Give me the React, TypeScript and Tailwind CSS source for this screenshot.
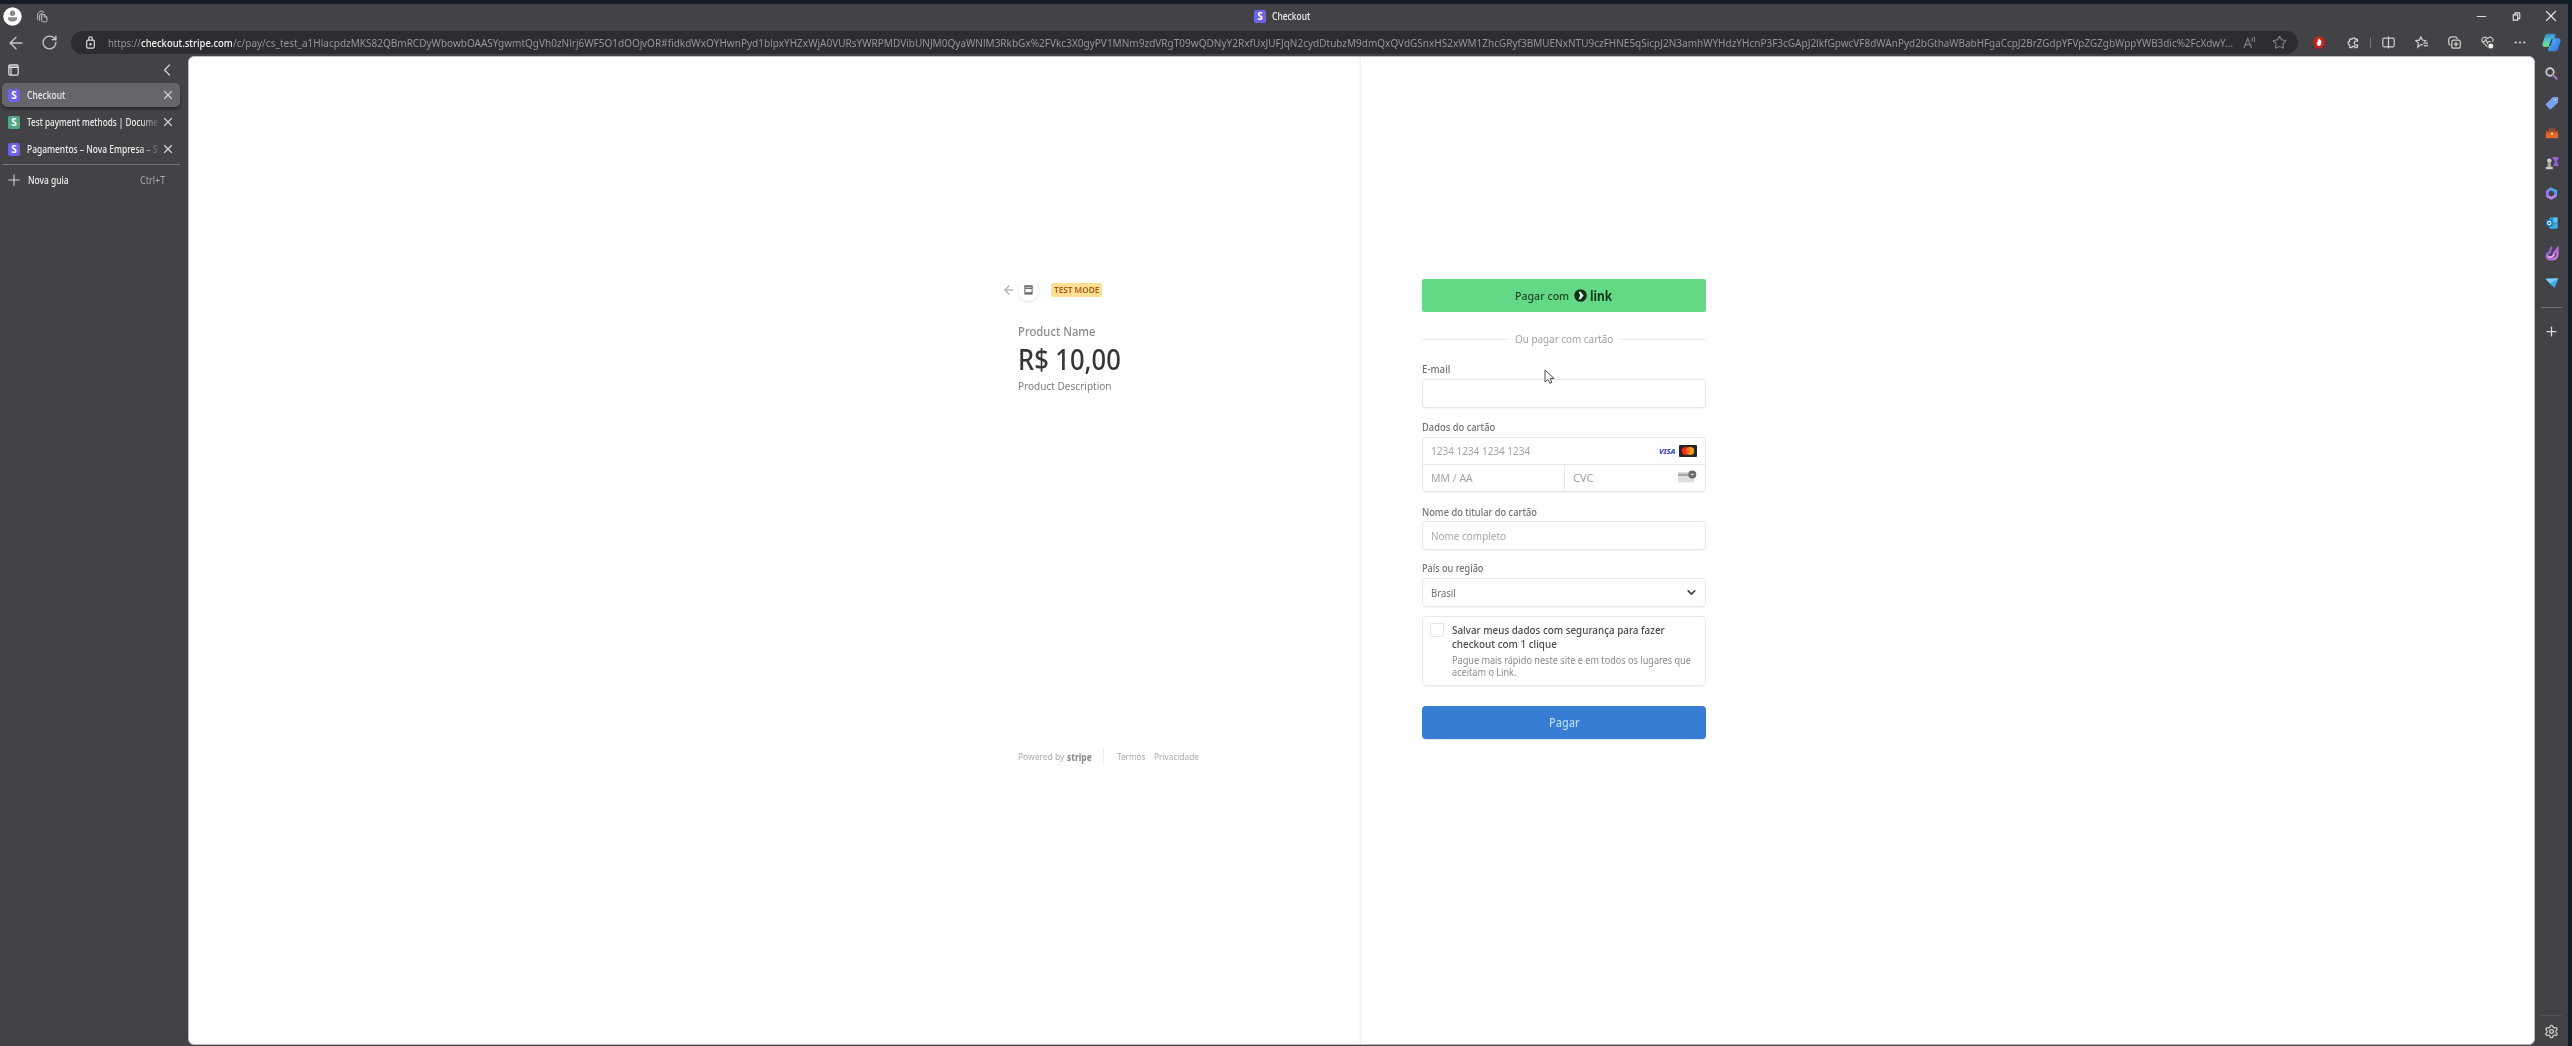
import React, { useLayoutEffect, useRef, useState } from "react";
import {
  ArrowLeft, RotateCw, ChevronLeft, ChevronDown, X, Plus, Minus, Search, Star,
  Settings,
} from "lucide-react";

/** One line of text, condensed or expanded horizontally to fill `w` pixels. */
function Fit({ w, className = "", children }: { w: number; className?: string; children: React.ReactNode }) {
  const ref = useRef<HTMLSpanElement>(null);
  const [scale, setScale] = useState(1);
  useLayoutEffect(() => {
    if (ref.current) setScale(w / ref.current.offsetWidth);
  }, [w]);
  return (
    <div className={"shrink-0 whitespace-nowrap " + className} style={{ width: w }}>
      <span ref={ref} className="inline-block origin-left" style={{ transform: `scaleX(${scale})` }}>
        {children}
      </span>
    </div>
  );
}

function Favicon({ green = false }: { green?: boolean }) {
  return (
    <span
      className={
        "flex h-[13px] w-3 shrink-0 items-center justify-center rounded-[2px] text-[10px] leading-none font-bold text-white " +
        (green ? "bg-[#4fa884]" : "bg-[#6c63e8]")
      }
    >
      S
    </span>
  );
}

function Tab({ title, width, active, green, fade }: { title: string; width: number; active?: boolean; green?: boolean; fade?: boolean }) {
  return (
    <div
      className={
        "flex h-[24px] w-[178px] items-center rounded-[5px] pl-1.5 " +
        (active ? "bg-[#66656a] shadow-[0_2px_3px_rgba(0,0,0,0.45)]" : "")
      }
    >
      <Favicon green={green} />
      <div className={"ml-[7px] w-[134px] overflow-hidden " + (fade ? "[mask-image:linear-gradient(to_right,black_84%,transparent)]" : "")}>
        <Fit w={width} className="text-[10.5px] leading-[16px] font-medium text-[#ededee]">{title}</Fit>
      </div>
      <X className="h-[14px] w-[14px] text-[#d5d5d7]" strokeWidth={2} />
    </div>
  );
}

const URL_PARTS = [
  { w: 33, t: "https://" },
  { w: 92, t: "checkout.stripe.com", host: true },
  { w: 409, t: "/c/pay/cs_test_a1HlacpdzMKS82QBmRCDyWbowbOAASYgwmtQgVh0zNlrj6WF5O1dOOj" },
  { w: 639, t: "vOR#fidkdWxOYHwnPyd1blpxYHZxWjA0VURsYWRPMDVibUNJM0QyaWNlM3RkbGx%2FVkc3X0gyPV1MNm9zdVRgT09wQDNyY2RxfUxJUF" },
  { w: 617, t: "JqN2cydDtubzM9dmQxQVdGSnxHS2xWM1ZhcGRyf3BMUENxNTU9czFHNE5qSicpJ2N3amhWYHdzYHcnP3F3cGApJ2lkfGpwcVF8dWAn" },
  { w: 335, t: "Pyd2bGthaWBabHFgaCcpJ2BrZGdpYFVpZGZgbWppYWB3dic%2FcXdwY..." },
];

function TitleBar() {
  return (
    <div className="flex h-[27px] items-center pb-[3px]">
      <svg className="ml-[3px] h-[19px] w-[19px]" viewBox="0 0 19 19">
        <circle cx="9.500" cy="9.500" r="9.200" fill="#fff" />
        <circle cx="9.500" cy="6.200" r="2.700" fill="#8a8a8a" />
        <path d="M5 10.200h9v1.200c0 2-1.900 3.200-4.500 3.200S5 13.400 5 11.400z" fill="#8a8a8a" />
      </svg>
      <svg className="ml-[14px] h-[13px] w-[13px]" viewBox="0 0 14 16" fill="none" stroke="#c2c2c4" strokeWidth="1.200">
        <path d="M1 12V5l3-3.500h3l2 1.500M3.500 13.500V6L7 3.500M6 5.500h3l3.500 3V13c0 1-.5 1.500-1.500 1.500H7.500C6.500 14.500 6 14 6 13zM9 5.500v3.200h3.500" />
      </svg>
      <div className="ml-[1205px] flex items-center gap-[6px]">
        <Favicon />
        <Fit w={38} className="text-[10.5px] leading-[16px] font-medium text-[#f0f0f0]">Checkout</Fit>
      </div>
      <div className="mr-[8px] ml-auto flex items-center">
        <Minus className="h-[15px] w-[15px] text-[#dadada]" strokeWidth={1.800} />
        <svg className="ml-[23px] h-[9px] w-[9px]" viewBox="0 0 11 11" fill="none" stroke="#e0e0e0" strokeWidth="1.400">
          <path d="M1.500 3.500h5.500v6.500H1.500zM3.500 3V1.500c0-.3.2-.5.5-.5h4.500c.5 0 1 .4 1 1v5.500c0 .4-.3.600-.7.600H7.500" />
        </svg>
        <X className="ml-[21px] h-[18px] w-[18px] text-[#e2e2e2]" strokeWidth={1.600} />
      </div>
    </div>
  );
}

function Toolbar() {
  return (
    <div className="flex h-[25px] items-start">
      <div className="flex h-[23px] w-[71px] items-center">
        <ArrowLeft className="ml-[6px] h-5 w-5 text-[#c8c8ca]" strokeWidth={1.600} />
        <RotateCw className="ml-[15px] h-[17px] w-[17px] text-[#c8c8ca]" strokeWidth={1.900} />
      </div>
      <div className="flex h-[23px] w-[2227px] items-center rounded-full bg-[#2d2c30]">
        <svg className="ml-[15px] h-[13px] w-[9px]" viewBox="0 0 9 13" fill="none" stroke="#dcdcde" strokeWidth="1.200">
          <rect x=".7" y="4.200" width="7.600" height="8" rx="1.200" />
          <path d="M2.700 4.200V2.600a1.800 1.800 0 0 1 3.600 0v1.600" />
          <circle cx="4.500" cy="8.200" r=".6" fill="#dcdcde" />
        </svg>
        <div className="ml-[13px] flex">
          {URL_PARTS.map((p) => (
            <Fit key={p.t} w={p.w} className={"text-[11.5px] leading-[20px] " + (p.host ? "font-medium text-[#f4f4f6]" : "text-[#97969c]")}>
              {p.t}
            </Fit>
          ))}
        </div>
        <svg className="ml-[10px] h-[13px] w-[13px]" viewBox="0 0 13 13" fill="none" stroke="#86858a" strokeWidth="1.100">
          <path d="M1 12 4.800 2.500 8.600 12M2.300 8.700h5M8.700 2c1 .7 1 2.500 0 3.200M10.500.700c1.600 1.500 1.600 4 .5 5.300" />
        </svg>
        <Star className="ml-4 h-[15px] w-[15px] text-[#86858a]" strokeWidth={1.700} />
      </div>
      <div className="flex h-[23px] flex-1 items-center text-[#cfcfd1]">
        <svg className="ml-[15px] h-[13px] w-3" viewBox="0 0 12 13">
          <path d="M3.700.5h4.600l3.200 3.300v5.400l-3.200 3.300H3.700L.5 9.200V3.800z" fill="#c8221c" />
          <path d="M6.300 2.800c.8 0 1 .6 1 1.500l1 .5c.3 2.400-.2 5.200-2.300 5.200-1.700 0-2.300-1.800-2.300-3.500l.9-.2.300-2c.2-.9.500-1.500 1.400-1.500z" fill="#fff" />
        </svg>
        <svg className="ml-[22px] h-3 w-3" viewBox="0 0 12 12" fill="none" stroke="currentColor" strokeWidth="1.300">
          <path d="M10.500 4V3c0-.6-.4-1-1-1H8.200C8.200.6 5 .6 5 2H3.500c-.6 0-1 .4-1 1v1.500C.6 4.500.6 7.700 2.500 7.700V9.500c0 .6.4 1 1 1H5c0-1 .6-1.300 1.500-1.300s1.500.3 1.500 1.300h1.500c.6 0 1-.4 1-1V8C8.300 8.300 7.300 7.500 7.300 6s1-2.300 3.200-2z" />
        </svg>
        <span className="ml-[11px] h-[11px] w-px bg-[#77767b]" />
        <svg className="ml-[11px] h-[13px] w-[13px]" viewBox="0 0 13 13" fill="none" stroke="currentColor" strokeWidth="1.200">
          <path d="M5 2.200H2c-.7 0-1.200.5-1.200 1.200v6.200c0 .7.500 1.200 1.200 1.200h3M8 2.200h3c.7 0 1.200.5 1.200 1.200v6.200c0 .7-.5 1.200-1.200 1.200H8M6.500.5v12M4.500 2.200h4M4.500 10.800h4" />
        </svg>
        <svg className="ml-5 h-[13px] w-[13px]" viewBox="0 0 15 15" fill="none" stroke="currentColor" strokeWidth="1.400">
          <path d="M9 10.500 7 9.700 3.200 13l.6-4.700L1 5.300l4-.6L6.800 1l1.800 3.700 3.700.6-1.500 1.500M9.500 8.200H15M10.200 11.200H15" />
        </svg>
        <svg className="ml-5 h-[13px] w-[13px]" viewBox="0 0 13 13" fill="none" stroke="currentColor" strokeWidth="1.200">
          <rect x="3.800" y="4.200" width="8.500" height="8" rx="2" />
          <path d="M8 6v4.400M5.900 8.200h4.300M2.500 9.500C1.200 9 .7 8.200.7 7V4.200C.7 2.200 2 .800 4 .800h2.500c1.600 0 2.500.7 2.900 1.900" />
        </svg>
        <svg className="ml-5 h-[13px] w-[13px]" viewBox="0 0 13 13" fill="none" stroke="currentColor" strokeWidth="1.100">
          <path d="M6.500 10.800 1.500 5.800C-.5 3 3.500-.7 6.500 2.500 9.500-.7 13.500 3 11.500 5.800M.5 5.500h3l1.300-2 1.700 3.800 1.300-1.800h2" />
          <circle cx="9.800" cy="10" r="2.500" fill="#ededee" stroke="none" />
        </svg>
        <svg className="ml-[20px] h-[13px] w-3" viewBox="0 0 12 13" fill="#d8d8da">
          <circle cx="1.700" cy="6.500" r="1.100" /><circle cx="6" cy="6.500" r="1.100" /><circle cx="10.300" cy="6.500" r="1.100" />
        </svg>
        <svg className="ml-[16px] h-[19px] w-[19px]" viewBox="0 0 20 24" preserveAspectRatio="none">
          <defs>
            <linearGradient id="cpA" x1="0" y1="0" x2="0" y2="1"><stop offset="0" stopColor="#2f8fd0" /><stop offset=".5" stopColor="#4fc6c4" /><stop offset="1" stopColor="#7ce08c" /></linearGradient>
            <linearGradient id="cpB" x1="0" y1="0" x2="1" y2="1"><stop offset="0" stopColor="#52b8f0" /><stop offset="1" stopColor="#2f6fe0" /></linearGradient>
          </defs>
          <path d="M6 1h6.500c1.500 0 2 1 1.500 2.500l-3.500 11c-.6 2-1.500 3-3.500 3H3c-2 0-3-1.500-2.500-4L3 4C3.500 2 4.500 1 6 1z" fill="url(#cpA)" />
          <path d="M14 23H8c-1.500 0-2-1-1.500-2.500l3.500-11c.6-2 1.500-3 3.500-3H17c2 0 3 1.500 2.500 4L17 20c-.5 2-1.500 3-3 3z" fill="url(#cpB)" />
          <path d="m9.500 8.500 2-1.500-2.500 9-1.800 1.200z" fill="#2a3d66" />
        </svg>
      </div>
    </div>
  );
}

function TabPane() {
  return (
    <div className="w-[188px] shrink-0 pl-0.5">
      <div className="flex h-[27px] items-center">
        <svg className="ml-[6px] h-[12px] w-[11px]" viewBox="0 0 11 12" fill="none" stroke="#e2e2e3" strokeWidth="1.200">
          <rect x=".8" y=".8" width="9.400" height="10.400" rx="1.500" />
          <path d="M.8 2h9.400M.8 3.500h9.400M3 3.500v7.500" />
        </svg>
        <ChevronLeft className="ml-[138px] h-[20px] w-[20px] text-[#d0d0d2]" strokeWidth={1.500} />
      </div>
      <div className="flex flex-col gap-[3px]">
        <Tab title="Checkout" width={38} active />
        <Tab title="Test payment methods | Docume" width={131} green fade />
        <Tab title="Pagamentos – Nova Empresa – S" width={131} fade />
      </div>
      <div className="mt-[3px] h-px w-[178px] bg-[#77767b]" />
      <div className="mt-[7px] flex h-[16px] items-center">
        <Plus className="ml-[3px] h-[18px] w-[18px] text-[#d0d0d2]" strokeWidth={1.500} />
        <Fit w={41} className="ml-[5px] text-[10.5px] leading-[16px] font-medium text-[#f0f0f0]">Nova guia</Fit>
        <Fit w={25} className="ml-[71px] text-[10.5px] leading-[16px] text-[#a9a9ac]">Ctrl+T</Fit>
      </div>
    </div>
  );
}

function SideIcon({ children }: { children: React.ReactNode }) {
  return <div className="flex h-[30px] items-center justify-center">{children}</div>;
}

function EdgeSidebar() {
  return (
    <div className="flex w-[33px] shrink-0 flex-col pt-0.5">
      <SideIcon>
        <svg className="h-[13px] w-[13px]" viewBox="0 0 13 13" fill="none"><circle cx="5" cy="5" r="3.800" stroke="#cfcfd0" strokeWidth="1.700" /><path d="m8 8 3.800 3.800" stroke="#a77bd0" strokeWidth="1.900" strokeLinecap="round" /></svg>
      </SideIcon>
      <SideIcon>
        <svg className="h-[14px] w-[14px]" viewBox="0 0 14 14"><path d="M8 1h4c.8 0 1.200.4 1.200 1.200V6.500L6.500 12.700c-.8.7-1.500.7-2.200 0L1.200 9.600c-.6-.7-.6-1.400.1-2z" fill="#7d9fea" /><circle cx="10.500" cy="3.700" r=".8" fill="#e8efff" /></svg>
      </SideIcon>
      <SideIcon>
        <svg className="h-[11px] w-[14px]" viewBox="0 0 14 12" preserveAspectRatio="none"><path d="M4.500 3V1.500h5V3" fill="none" stroke="#b9501f" strokeWidth="1.200" /><path d="M.8 3h12.400v3.500H.8z" fill="#b5521f" /><path d="M.8 5.800h12.400v4.400c0 .6-.4 1-1 1H1.800c-.6 0-1-.4-1-1z" fill="#e8682a" /><path d="M6 5h2v2.300H6z" fill="#ffd9b0" /></svg>
      </SideIcon>
      <SideIcon>
        <svg className="h-[14px] w-[14px]" viewBox="0 0 14 14"><circle cx="4.300" cy="4.700" r="2.300" fill="#c9c9c9" /><path d="M3 6.500h2.600l.8 4.500H2.200z" fill="#a5a5a5" /><path d="M.8 11h7v2.200h-7z" fill="#c9c9c9" /><path d="M7.500 1h6v1.500l-1.300 2v2l1.300 2v1.500h-5v-1.500l1.200-2v-2L7.500 2.500z" fill="#9163d8" /></svg>
      </SideIcon>
      <SideIcon>
        <svg className="h-[13px] w-[13px]" viewBox="0 0 14 14" fill="none" strokeWidth="3" strokeLinecap="round"><path d="M2.500 9.500V5L5.500 2.200" stroke="#8d7bea" /><path d="M6.500 2.200 11.500 4.500V8" stroke="#4aa3e8" /><path d="M11.300 9.500 7 12 3.300 10.500" stroke="#b184e8" /></svg>
      </SideIcon>
      <SideIcon>
        <svg className="h-[12px] w-[12px]" viewBox="0 0 13 12"><rect x="3.500" width="9" height="12" rx="1" fill="#2e9fdd" /><path d="M8 0h4.500v5H8z" fill="#5fc3f2" /><path d="m3.500 12 9-6v5c0 .6-.4 1-1 1z" fill="#3cb4e5" /><rect y="2.500" width="7" height="7" rx="1" fill="#1773bd" /><circle cx="3.500" cy="6" r="1.800" fill="none" stroke="#fff" strokeWidth="1.100" /></svg>
      </SideIcon>
      <SideIcon>
        <svg className="h-[15px] w-[14px]" viewBox="0 0 14 15" fill="none" strokeLinecap="round">
          <defs><linearGradient id="dsg" x1="0" y1="0" x2="1" y2="1"><stop offset="0" stopColor="#7a5be0" /><stop offset="1" stopColor="#e07be8" /></linearGradient></defs>
          <path d="M6.200 1.500 4.700 6.500C.500 7.500.500 13.500 6 13.500c4.500 0 6.500-2.500 6.500-6V2.500L8.500 8" stroke="url(#dsg)" strokeWidth="2.200" />
          <path d="M3.500 10.500c1.500 1.300 4 .8 5.500-1.500" stroke="#e9a8f5" strokeWidth="2" />
        </svg>
      </SideIcon>
      <SideIcon>
        <svg className="h-[10px] w-[14px]" viewBox="0 0 14 10"><path d="M.5.800 13.500.3 9.800 9.700 6.300 7.200z" fill="#3ea8e0" /><path d="M.5.800 13.500.3 5 5.500z" fill="#7cd0f5" /></svg>
      </SideIcon>
      <div className="mx-auto mt-[9px] h-px w-[21px] bg-[#77767b]" />
      <Plus className="mx-auto mt-[16px] h-[15px] w-[15px] text-[#dcdcdc]" strokeWidth={2} />
      <div className="mx-auto mt-auto h-px w-[21px] bg-[#55545a]" />
      <Settings className="mx-auto mt-[8px] mb-[7px] h-[15px] w-[15px] text-[#cfcfd0]" strokeWidth={2} />
    </div>
  );
}

function Summary() {
  return (
    <section className="w-[1171px] shrink-0 pt-[222px]">
      <div className="ml-[813px] flex h-[22px] items-center">
        <ArrowLeft className="h-[14px] w-[14px] text-[#9b9b9b]" strokeWidth={1.800} />
        <span className="ml-[2px] flex h-[21px] w-[21px] items-center justify-center rounded-full bg-white shadow-[0_1px_3px_rgba(0,0,0,0.13)]">
          <svg className="h-[10px] w-[9px]" viewBox="0 0 9 10" fill="none" stroke="#6d6d6d"><path d="M.3 1.300h8.400" strokeWidth="2.200" /><path d="M.9 2v7h7.200V2" strokeWidth="1.100" /><path d="M1 8.200h7" strokeWidth="2" /><path d="M1 3.500h7" strokeWidth="1" /></svg>
        </span>
        <span className="ml-3 flex h-[14px] w-[51px] items-center justify-center rounded-[2px] bg-[#fddf94]">
          <Fit w={45} className="text-[9.500px] leading-[14px] font-semibold text-[#a95713]">TEST MODE</Fit>
        </span>
      </div>
      <div className="ml-[829px]">
        <Fit w={78} className="mt-[21px] text-[12px] leading-[20px] font-medium text-[#8b8b8b]">Product Name</Fit>
        <Fit w={103} className="text-[28px] leading-[34px] font-medium text-[#363636]">R$ 10,00</Fit>
        <Fit w={94} className="mt-[1px] text-[11px] leading-[18px] text-[#7f7f7f]">Product Description</Fit>
      </div>
      <footer className="mt-[353px] ml-[829px] flex h-[17px] items-center text-[9px] leading-[16px] text-[#ababab]">
        <Fit w={46}>Powered by</Fit>
        <Fit w={25} className="ml-[3px] text-[10px] font-extrabold text-[#8e8e8e]">stripe</Fit>
        <span className="ml-[11px] h-[17px] w-px bg-[#ececec]" />
        <Fit w={28} className="ml-[13px]">Termos</Fit>
        <Fit w={45} className="ml-[9px]">Privacidade</Fit>
      </footer>
    </section>
  );
}

const FIELD = "mt-[2px] flex h-[29px] items-center rounded-[4px] border border-[#e9e9e9] bg-white px-[8px] shadow-[0_1px_1px_rgba(0,0,0,0.05)]";

function Label({ w, children }: { w: number; children: string }) {
  return <Fit w={w} className="text-[10px] leading-[16px] font-medium text-[#727272]">{children}</Fit>;
}

function PaymentForm() {
  return (
    <section className="relative flex-1 border-l border-[#f2f2f2] pt-[222px] pl-[61px] shadow-[-2px_0_3px_rgba(0,0,0,0.02)]">
      <div className="w-[284px]">
        <button className="flex h-[33px] w-full items-center rounded-[2px] bg-[#63d885] pl-[93px]">
          <Fit w={54} className="text-[11px] leading-[18px] font-medium text-[#1c4a24]">Pagar com</Fit>
          <svg className="ml-[5px] h-[13px] w-[13px]" viewBox="0 0 13 13"><circle cx="6.500" cy="6.500" r="6.300" fill="#123018" /><path d="M4.600 2.800h2l3 3.700-3 3.700h-2l1.600-3.700z" fill="#d9ffe2" /></svg>
          <Fit w={22} className="ml-[3px] text-[13.5px] leading-[18px] font-bold text-[#16391d]">link</Fit>
        </button>
        <div className="mt-[18px] flex h-[18px] items-center justify-between">
          <span className="h-px w-[87px] bg-[#ececec]" />
          <Fit w={98} className="text-[11px] leading-[18px] text-[#a2a2a2]">Ou pagar com cartão</Fit>
          <span className="h-px w-[87px] bg-[#ececec]" />
        </div>

        <div className="mt-[13px]">
          <Label w={28}>E-mail</Label>
          <div className={FIELD} />
        </div>

        <div className="mt-[11px]">
          <Label w={73}>Dados do cartão</Label>
          <div className="mt-[2px] h-[55px] rounded-[4px] border border-[#e9e9e9] shadow-[0_1px_1px_rgba(0,0,0,0.05)]">
            <div className="flex h-[27px] items-center border-b border-[#e9e9e9] px-[8px]">
              <Fit w={99} className="text-[11px] leading-[18px] text-[#a4a4a4]">1234 1234 1234 1234</Fit>
              <span className="ml-auto flex h-[12px] w-[18px] items-center justify-center rounded-[1px] bg-white shadow-[0_0_1px_rgba(0,0,0,0.2)]">
                <Fit w={16} className="text-[7.500px] leading-[12px] font-extrabold text-[#3b49bd] italic">VISA</Fit>
              </span>
              <svg className="ml-[3px] h-[12px] w-[18px]" viewBox="0 0 18 12"><rect width="18" height="12" rx="1" fill="#252525" /><circle cx="6.700" cy="6" r="3.900" fill="#eb2c1c" /><circle cx="11.300" cy="6" r="3.900" fill="#f59a23" /><path d="M9 2.850a3.900 3.900 0 0 1 0 6.300 3.900 3.900 0 0 1 0-6.300z" fill="#fb6316" /></svg>
            </div>
            <div className="flex h-[26px] items-center">
              <div className="flex h-full w-[142px] items-center border-r border-[#e9e9e9] pl-[8px]">
                <Fit w={42} className="text-[11px] leading-[18px] text-[#a4a4a4]">MM / AA</Fit>
              </div>
              <Fit w={20} className="ml-[8px] text-[11px] leading-[18px] text-[#a4a4a4]">CVC</Fit>
              <svg className="mr-[8px] mb-[4px] ml-auto h-[13px] w-[19px]" viewBox="0 0 19 13"><rect y="2" width="16" height="10.500" rx="1" fill="#dedede" /><path d="M0 3.700h16v2.300H0z" fill="#a6a6a6" /><circle cx="14.300" cy="4.500" r="4" fill="#6a6a6a" /><path d="M12.800 4.500h3" stroke="#ddd" strokeWidth="1.300" /></svg>
            </div>
          </div>
        </div>

        <div className="mt-[12px]">
          <Label w={115}>Nome do titular do cartão</Label>
          <div className={FIELD + " mt-px"}>
            <Fit w={75} className="text-[11px] leading-[18px] text-[#a8a8a8]">Nome completo</Fit>
          </div>
        </div>

        <div className="mt-[10px]">
          <Label w={61}>País ou região</Label>
          <div className={FIELD}>
            <Fit w={25} className="text-[11px] leading-[18px] text-[#6e6e6e]">Brasil</Fit>
            <ChevronDown className="-mr-px ml-auto h-[13px] w-[13px] text-[#444]" strokeWidth={3.200} />
          </div>
        </div>

        <div className="mt-[9px] flex h-[70px] rounded-[4px] border border-[#e9e9e9] pl-[7px] shadow-[0_1px_1px_rgba(0,0,0,0.05)]">
          <span className="mt-[6px] h-[14px] w-[14px] rounded-[2px] border border-[#e4e4e4] bg-white" />
          <div className="ml-[8px] pt-[6px]">
            <Fit w={213} className="text-[11px] leading-[14px] font-medium text-[#4a4a4a]">Salvar meus dados com segurança para fazer</Fit>
            <Fit w={105} className="text-[11px] leading-[14px] font-medium text-[#4a4a4a]">checkout com 1 clique</Fit>
            <Fit w={239} className="mt-[3px] text-[10px] leading-[12px] text-[#8b8b8b]">Pague mais rápido neste site e em todos os lugares que</Fit>
            <Fit w={64} className="text-[10px] leading-[12px] text-[#8b8b8b]">aceitam o Link.</Fit>
          </div>
        </div>

        <button className="mt-[20px] flex h-[33px] w-full items-center justify-center rounded-[4px] bg-[#377dd3] shadow-[0_1px_1px_rgba(0,0,0,0.1)]">
          <Fit w={31} className="text-[12px] leading-[18px] font-medium text-[#b9dafa]">Pagar</Fit>
        </button>
      </div>

      <svg className="absolute top-[312px] left-[183px] h-[16px] w-[12px]" viewBox="0 0 12 16">
        <path d="M1 1v12l2.800-2.500 1.900 3.800 2.200-1-1.800-3.700 4-.1z" fill="#fff" stroke="#4a4a4a" strokeWidth="1" strokeLinejoin="round" />
      </svg>
    </section>
  );
}

export default function App() {
  return (
    <div className="h-[1046px] w-[2572px] overflow-hidden bg-[#131c22] pt-[4px] pr-[4px] font-['Noto_Sans','Open_Sans',sans-serif]">
      <div className="flex h-[1042px] flex-col bg-[#434246]">
        <TitleBar />
        <Toolbar />
        <div className="flex min-h-0 flex-1">
          <TabPane />
          <main className="mb-px flex flex-1 rounded-[6px] border border-[#bdbdbf] bg-white">
            <Summary />
            <PaymentForm />
          </main>
          <EdgeSidebar />
        </div>
      </div>
    </div>
  );
}
